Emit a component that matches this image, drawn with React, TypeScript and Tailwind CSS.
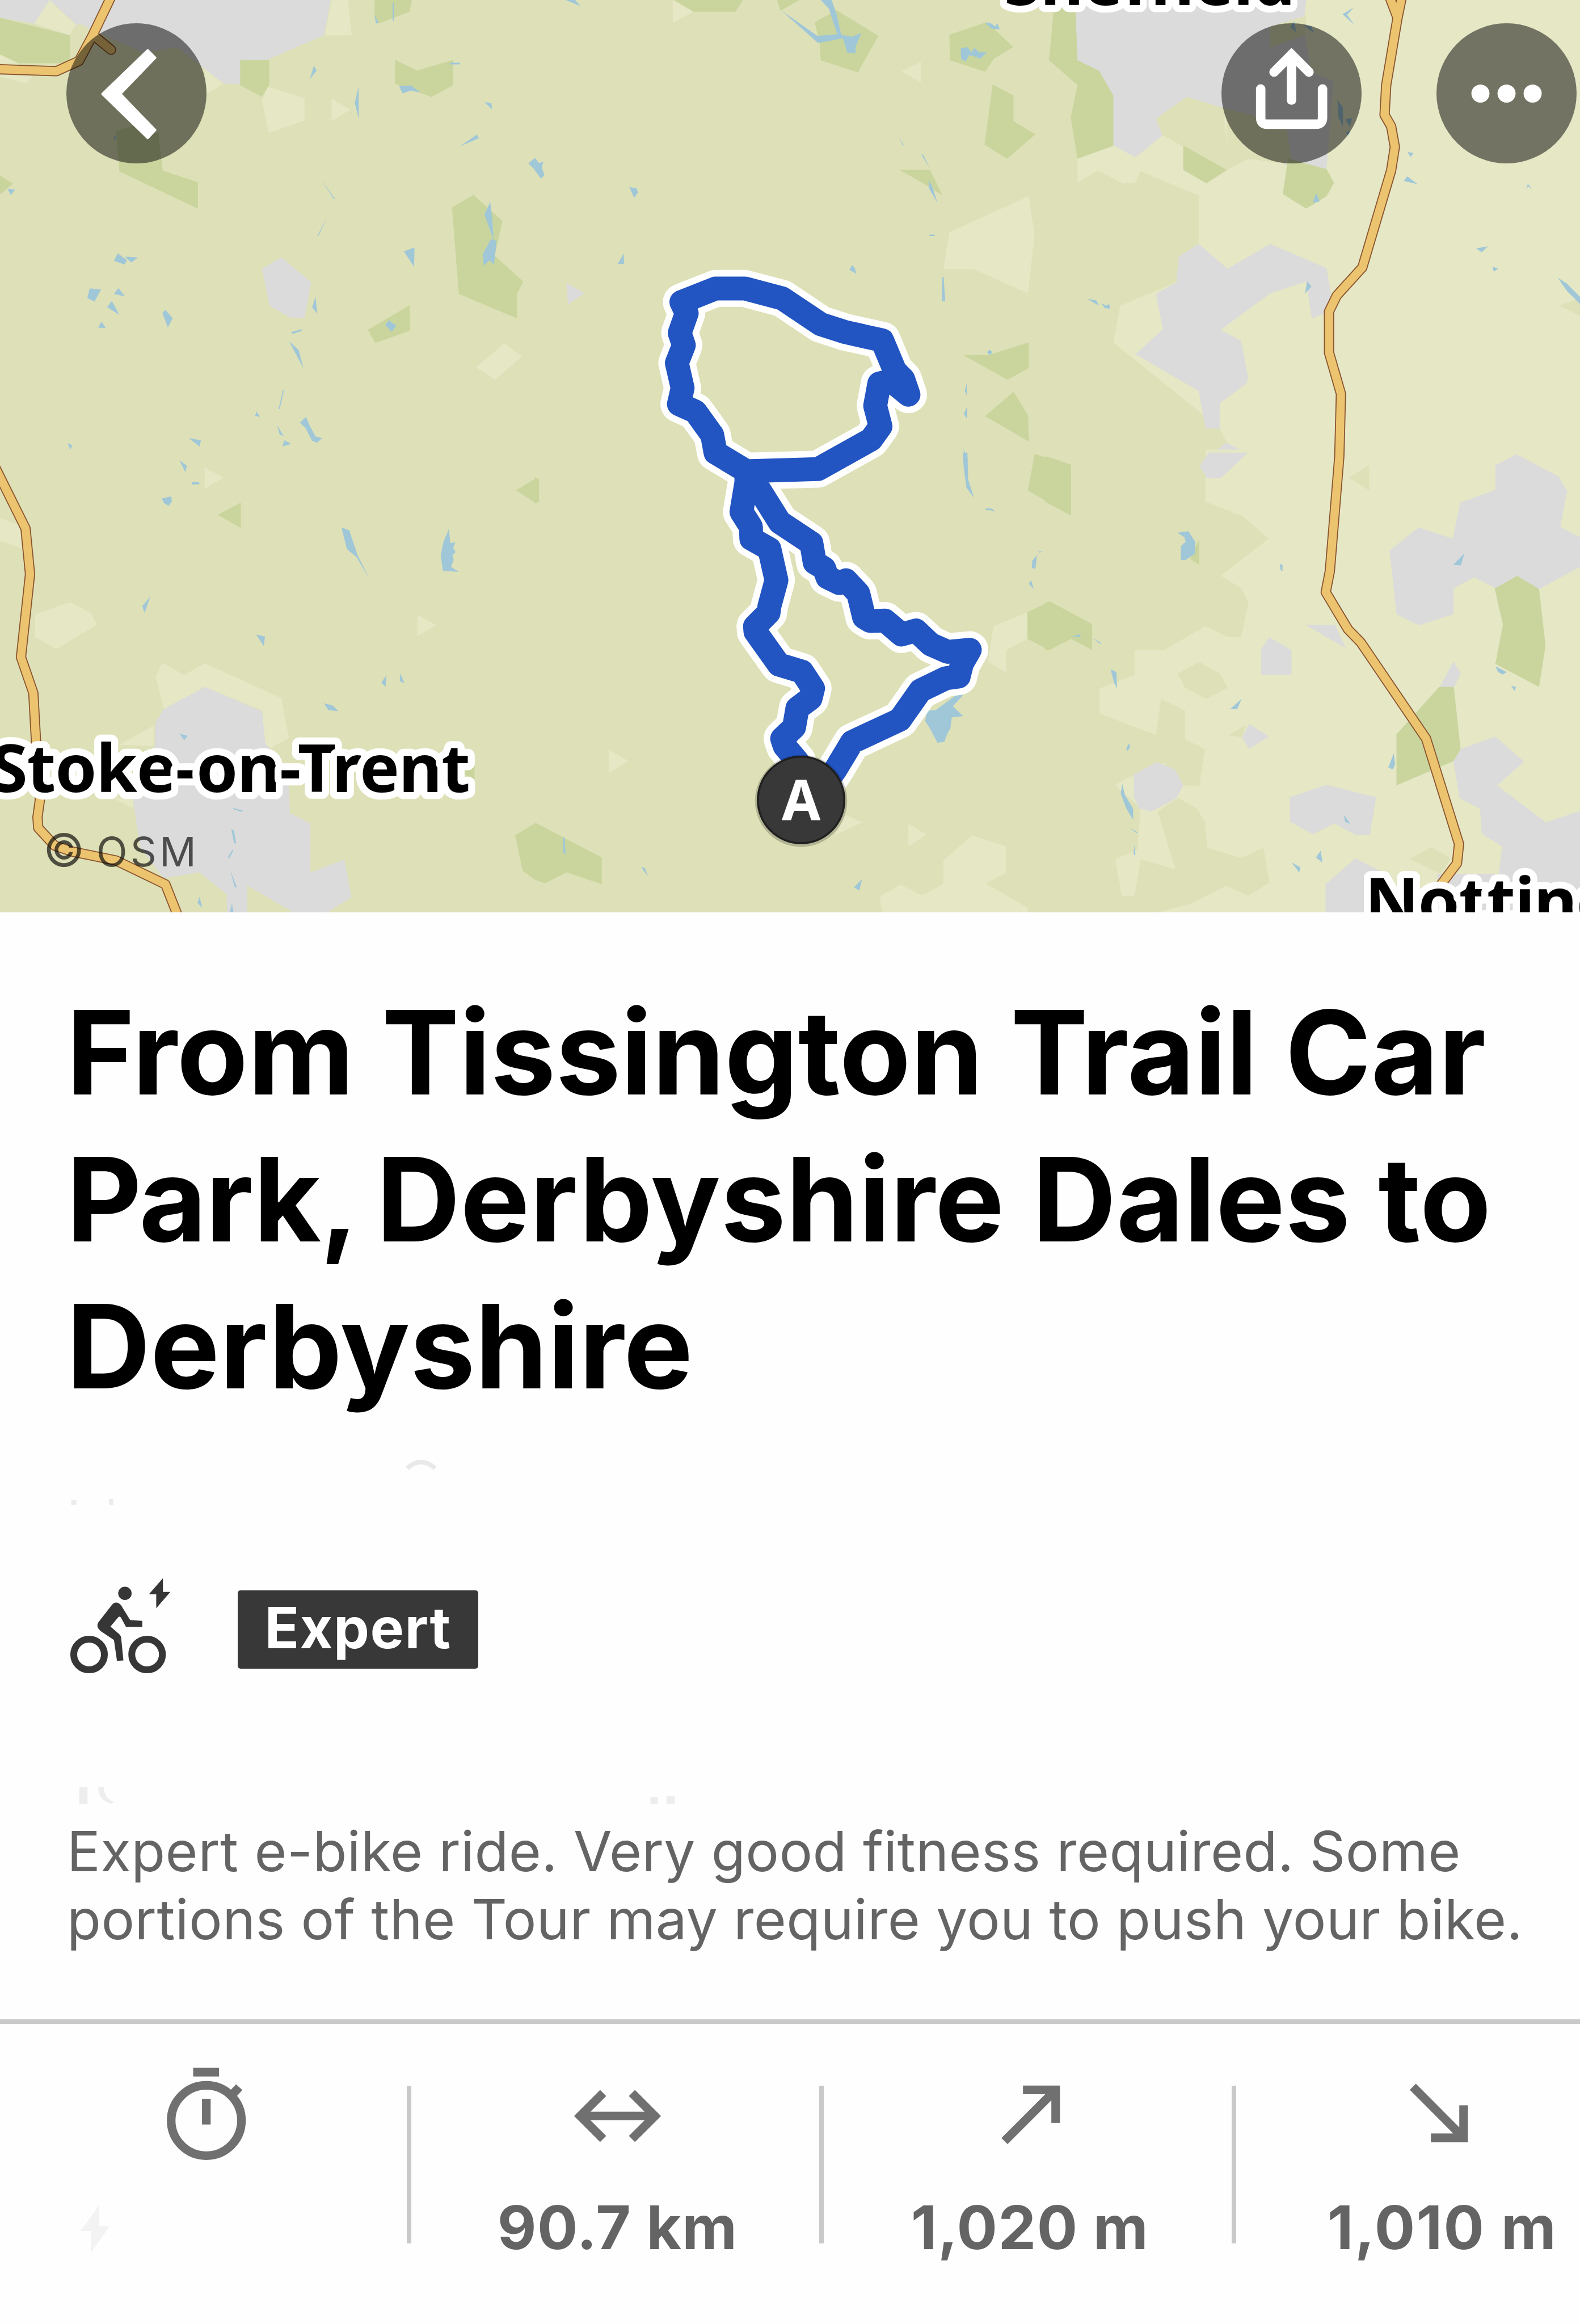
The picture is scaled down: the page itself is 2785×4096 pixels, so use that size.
import { FunctionComponent, ReactNode } from "react";

type Tile = {
  transform: string;
  meadow?: string;
  field?: string;
  town?: string;
  wood?: string;
  scrub?: string;
  water?: string;
};

// Land cover, split in six tiles (three columns, two rows)
const tiles: Tile[] = [
  {
    transform: "translate(0 0) scale(.829082 .714286)",
    town: "M0 0H970L950 120L790 200L745 285H658L600 235L520 160L400 230L270 240L210 120L225 85L145 0L100 80L0 60ZM825 875L912 960L893 1082L850 1080L790 1040L768 915Z",
    field:
      "M145 0L222 85L205 120L100 80ZM972 0H1020L1031 120H952ZM600 235L655 285L605 320ZM0 185L55 215H0ZM0 250L100 250L80 283L0 262ZM785 295L893 335V410L788 452L768 340ZM972 335L1028 373L972 412ZM1478 1168L1530 1212L1452 1292L1395 1250Z",
    meadow: "M232 80L420 180L520 160L600 240L605 320L480 470L205 330V120Z",
    wood: "M0 60L205 120V215H55L0 185ZM704 204H789V290L767 329L704 290ZM1098 0H1208L1200 40L1110 80L1098 60ZM1158 203L1222 240L1328 204V290L1265 330L1158 285ZM340 445L400 425L465 455L477 580L580 620V710L350 583ZM0 597L38 625L0 662ZM1388 663L1473 752L1450 870L1534 958L1515 1000V1083L1345 1000L1325 706ZM1202 1038V1125L1100 1167L1078 1122Z",
    water:
      "M920 223L928 240L908 270ZM1051 295L1052 405L1040 350ZM1170 293L1205 291L1232 315L1205 308L1180 318ZM1320 213H1348V219H1320ZM1151 10H1155V70H1151ZM1098 50L1110 78L1102 80ZM1420 348L1440 350L1443 372ZM1398 458L1404 470L1348 498ZM1568 537V578L1549 556ZM942 612L983 678L978 676ZM960 738L933 803L931 800ZM22 642L44 645L32 664ZM345 862L372 885L365 900L334 887ZM366 873L404 876L385 893ZM263 981L296 985L277 1026L256 1014ZM347 980L366 1008L334 1000ZM328 1024L350 1071L314 1045ZM298 1095L310 1116L287 1114ZM485 1054L506 1083L492 1114L476 1065ZM925 1010L930 1068L915 1045ZM853 1130L885 1120L884 1126L858 1136ZM847 1160L875 1190L890 1254ZM1184 855L1215 842L1214 908ZM1437 687L1443 745L1447 815L1420 730ZM1440 812L1456 820L1448 900L1435 885L1418 904L1415 865ZM1140 1090L1162 1108L1148 1128L1129 1105ZM830 1325L832 1330L820 1392L817 1390ZM752 1400L762 1418L748 1415ZM812 1446L832 1484L820 1478ZM897 1418L908 1448L925 1485L944 1490L930 1506L915 1500L895 1455L879 1438ZM833 1498L854 1510L828 1519ZM553 1490L589 1498L585 1519ZM198 1507L212 1515L206 1530ZM335 460L342 468L335 478Z",
  },
  {
    transform: "translate(1300 0) scale(.829082 .714286)",
    field:
      "M404 0L465 40L404 77ZM1131 210V280L1075 243ZM1448 667L1465 800L1445 998L1285 915H1197L1215 790Z",
    wood: "M408 0H610L588 40H465ZM710 0H775L720 37ZM885 35L1007 122L947 246L838 205L835 145L820 75ZM1325 75L1402 160L1345 200L1320 244L1217 205L1215 118ZM1525 0H1568V265L1507 205ZM1342 287L1403 325V412L1467 457L1384 540L1318 492ZM1068 577H1158L1195 665L1140 625ZM1448 1165V1252L1385 1292L1255 1208H1330ZM1403 1332L1446 1415L1448 1502L1320 1416ZM1465 1545L1530 1568H1462Z",
    scrub: "M457 110V145L435 168L424 140Z",
    town: "M92 962L145 998L97 1036Z",
    water:
      "M838 0H870L885 50L898 118L930 125L957 112L940 160V182L915 178L903 130L830 146L722 35L828 122L886 116L862 30ZM90 0H118L133 20ZM1320 78H1335L1350 90L1355 78L1363 100L1340 98L1332 90ZM1248 165L1268 160L1280 178L1288 162L1302 178L1325 178L1305 200L1285 190L1272 188L1264 208L1250 203ZM0 537L12 555L25 550L20 570L28 595L18 608L0 580ZM277 637L298 640L302 655L291 673ZM260 863L262 897L243 898ZM930 902L937 910L943 932L922 918ZM1194 942H1198L1203 1025H1193ZM1066 463L1083 497L1078 493ZM1131 522L1140 530L1158 573ZM1154 612L1165 635L1180 690L1155 640ZM1157 798H1172V803H1157ZM1325 1198L1333 1190L1341 1198L1334 1208ZM1266 1303V1345L1260 1330ZM1267 1384V1425L1257 1408ZM1256 1525L1270 1568H1262Z",
  },
  {
    transform: "translate(2540 0) scale(.829082 .714286)",
    field:
      "M765 0H1568V1568H590L530 1500L510 1455L200 1165L220 1040L385 960L450 830V665L280 583L265 620L230 625L155 580L95 620V540L200 495L345 460L470 500L660 160Z",
    town: "M85 0H765L760 55L660 90L660 160L762 120L780 245L845 275L825 575L700 560L705 480L530 370L415 330L330 400L345 460L265 535L200 495L150 250L95 205ZM450 830L535 914L660 830L825 912L838 1000L825 1062L782 1084L765 958L660 998L515 1122L575 1160L595 1285L590 1305L512 1372V1458H470L450 1330L265 1205L345 1120L325 1000L385 960L392 872ZM530 1505L597 1545L570 1568H465Z",
    scrub:
      "M765 55L660 90V160L762 120ZM415 330L520 370L535 495L595 540L530 580L345 460L325 405ZM530 370L705 420L725 560L595 540L535 495ZM1568 1015V1075L1508 1040Z",
    wood: "M28 0H88L95 205L158 240L200 325V496L95 540L75 400L95 290L12 205ZM405 495L533 578L473 624L405 578ZM712 540L825 575L847 622L825 668L765 710L697 660ZM0 1553L45 1568H0Z",
    water:
      "M905 25L885 50L906 84L872 48ZM730 72L736 110L718 92ZM755 85L780 90L788 112ZM857 340L873 365V430L860 400ZM880 405L900 402L893 432ZM882 450L895 445L888 462ZM1062 517L1080 520L1072 534ZM1062 600L1092 627L1051 615ZM794 657L805 685L785 690ZM1415 626L1427 642L1416 634L1410 644ZM1264 845L1298 838L1280 858ZM1312 907L1328 914L1315 924ZM768 957L781 975L762 998ZM123 1016L150 1022L158 1040ZM165 1032L180 1040L188 1034L190 1050L175 1048ZM1503 945L1530 965L1568 1010V1034L1530 990Z",
  },
  {
    transform: "translate(0 1100) scale(.829082 .720663)",
    field:
      "M600 50L656 84L600 122ZM0 220L60 245L70 325L0 298ZM205 504L265 540L285 580L165 662L103 622V545ZM1223 546L1280 582L1223 618ZM475 708L540 750L600 710L825 828L847 962L770 1010L770 870L600 790L480 865L457 755ZM450 920V990L350 985ZM330 1165H390V1198ZM1350 1100L1370 1150Z",
    town: "M600 790L768 872L778 980L845 1080L850 1215L910 1250V1415L1010 1372L1030 1500L960 1550H860L725 1460V1550H665V1490L585 1415L480 1435L410 1330L390 1170L450 1150L455 910L480 865Z",
    wood: "M706 168V254L638 210ZM1568 88V168L1513 127ZM1350 1080L1391 1055V1102ZM1568 1250V1440L1532 1410L1510 1290Z",
    water:
      "M526 25L548 45L543 66ZM562 100H584V107H562ZM474 155L502 147L504 165L494 179L481 170ZM441 484L424 540L417 518ZM1001 252L1024 262L1048 345L1083 425L1045 352L1017 325ZM1316 257L1320 305L1335 302L1328 322L1336 335L1326 345L1330 362L1322 385L1345 402L1298 398L1292 345L1300 300ZM751 613L777 620L773 652ZM1133 750L1130 790L1118 775ZM1173 745L1186 778L1172 770ZM950 845L975 852L992 872L962 868ZM526 947L550 955L540 970ZM682 1198L712 1207L708 1211L685 1203ZM678 1268L686 1275L692 1318L686 1316ZM682 1338L684 1342L672 1368L668 1365ZM675 1408L694 1466L688 1465ZM585 1498L593 1535L579 1518ZM680 1520L684 1550H674Z",
  },
  {
    transform: "translate(1300 1100) scale(.829082 .720663)",
    field:
      "M217 1002L275 1040L217 1080ZM1444 538V628L1382 665V742L1328 705L1345 585ZM910 1220L960 1247L880 1290ZM1094 1250L1148 1288L1094 1328ZM1282 1290L1382 1328V1415L1322 1453L1445 1535V1550H1018L1010 1497L1072 1457L1135 1493L1197 1455V1375Z",
    wood: "M0 82L12 90V165L0 172ZM1465 5L1568 40V210L1445 127ZM1508 502L1568 538V630L1508 665L1444 628V538ZM0 1247L196 1365V1455L93 1415L30 1452L0 1440Z",
    water:
      "M1254 0H1268L1270 90L1287 152L1265 118L1257 50ZM1322 188L1340 189L1350 199L1337 194H1322ZM1474 333H1490L1480 337ZM1472 345L1467 392L1457 388L1458 365ZM1455 430L1462 460L1448 442ZM1238 815L1255 818L1225 855L1255 888L1222 893L1218 930L1210 945L1200 975L1180 978L1158 930L1144 905L1150 870L1175 868ZM82 1297H87L90 1352H84ZM312 1398L322 1400L332 1430ZM959 1438L951 1476L935 1466Z",
  },
  {
    transform: "translate(2540 1100) scale(.829082 .720663)",
    field:
      "M470 -10H1568V1550H330L430 1520L530 1460L595 1494L658 1450L640 1332L575 1367L475 1332L468 1245L445 1200L390 1165L330 1210L382 1405L280 1372L262 1495H225L205 1370L270 1340L280 1200L205 1120L260 1085L350 1045L390 1120L452 1125L468 1000L410 965V870L340 830L325 952L160 880V795L262 750V665H350L470 585L535 622H575L596 505L575 457L515 415L655 290L580 215L470 165Z",
    town: "M480 0H595L515 86H475L453 45ZM1382 5L1505 80L1530 130L1510 250L1568 285V385L1448 460L1318 455L1258 420L1197 458V545L1095 582L1030 545L1010 330L1095 252L1195 290L1217 168L1320 125V42ZM763 580H850L882 660ZM657 622L722 665V750H633V665ZM1197 704L1219 745L1197 792L1157 790ZM598 915L657 957L598 998L577 960ZM328 1043L382 1070L405 1122L385 1165L312 1210L275 1200L260 1160V1085ZM825 1120L970 1162L952 1290H912L848 1250L785 1287L718 1245V1162ZM1320 957L1404 1042L1325 1122L1468 1247L1568 1208V1550H1150V1420H1330L1340 1328L1280 1285L1275 1200L1215 1165L1197 1040L1217 1000ZM910 1368L985 1412V1550H822V1455Z",
    wood: "M0 12L76 40V212L0 165ZM15 502L138 578V665L76 628L12 665H0V505ZM452 290V378L425 358ZM1384 415L1448 460L1467 650L1448 790L1320 712L1342 580L1318 458ZM1155 790H1198L1218 1000L1197 1040L1030 1122V950Z",
    scrub:
      "M950 42V127L890 84ZM452 706L512 745L535 793L473 830L410 793L388 745ZM538 953L587 918L578 960ZM1132 1330L1190 1368L1160 1420L1070 1370Z",
    water:
      "M388 270L420 265L440 300V340L412 362L398 362V315L412 300L408 285ZM688 375L696 378V400L690 395ZM1229 340L1219 380L1196 378ZM192 730L209 740L211 795L202 775ZM576 830L563 865L543 864ZM78 620L105 612L100 622ZM140 625L166 643L160 644ZM1320 720L1353 740L1342 748L1328 740ZM1366 786L1380 790L1377 804ZM1022 1014L1026 1050L1020 1068L1006 1062ZM245 982L250 990L242 1006L238 998ZM226 1116L234 1155L258 1200V1238L238 1200L222 1150ZM247 1265L271 1280L268 1283ZM262 1322L265 1356H259ZM875 1220L895 1252L880 1245ZM808 1342L813 1382L794 1365ZM723 1382L748 1398L745 1416Z",
  },
];

const roads = [
  "M3377 -8L3396 42M3407 -8L3396 46L3369 207L3365 279L3381 307L3390 357L3381 414L3311 650L3249 718L3230 757V857L3259 957L3255 1110L3232 1388L3222 1439L3276 1529L3307 1561L3466 1795L3546 2051L3541 2098L3494 2160",
  "M-12 1135L62 1284L73 1395L51 1597L81 1684L87 1792L97 1943L91 1986L93 2012L133 2055L174 2069L282 2091L402 2149L434 2230",
  "M-8 168L137 173L192 148L225 86L272 -12M232 90L270 121",
];

const route =
  "M1947 1900L1938 1850L1907 1813L1901 1795L1930 1767L1938 1721L1970 1697L1976 1673L1949 1632L1893 1615L1836 1535L1835 1522L1868 1489L1870 1473L1887 1410L1870 1334L1826 1309L1825 1280L1802 1244L1814 1172L1814 1145L1739 1100L1731 1057L1690 1000L1650 982L1659 943L1645 882L1662 839L1652 809L1669 761L1656 734L1739 701H1810L1901 725L1995 788L2054 807L2144 827L2175 901L2195 921L2208 959L2166 925L2137 932L2127 986L2140 1036L2117 1068L1988 1140L1814 1145L1843 1186L1895 1269L1972 1320L1980 1367L2003 1381L2011 1403L2040 1417L2056 1410L2086 1442L2100 1500L2115 1509L2151 1508L2191 1542L2226 1532L2262 1566L2303 1584L2357 1579L2338 1612L2330 1644L2299 1648L2237 1678L2187 1749L2071 1803L2030 1871L1985 1935";

const MapLabel: FunctionComponent<{
  x: number;
  y: number;
  width: number;
  children: string;
}> = ({ x, y, width, children }) => {
  return (
    <text
      x={x}
      y={y}
      textLength={width}
      className="fill-black stroke-white stroke-[34px] font-['Noto_Sans',sans-serif] text-[162px] font-bold [paint-order:stroke] [stroke-linejoin:round]"
    >
      {children}
    </text>
  );
};

const TourMap: FunctionComponent = () => {
  return (
    <svg viewBox="0 0 3840 2217" className="block h-[1608px] w-[2785px]">
      <rect width="3840" height="2217" className="fill-[#dee0b7]" />
      {tiles.map((tile) => (
        <g key={tile.transform} transform={tile.transform}>
          <path d={tile.field} className="fill-[#e5e7c5]" />
          <path d={tile.town} className="fill-[#dbdbdb]" />
          <path d={tile.meadow} className="fill-[#dee0b7]" />
          <path d={tile.scrub} className="fill-[#dee0b7]" />
          <path d={tile.wood} className="fill-[#c9d59d]" />
          <path d={tile.water} className="fill-[#9fc7d8]" />
        </g>
      ))}

      {roads.map((d) => (
        <g key={d} fill="none" strokeLinejoin="round" strokeLinecap="round">
          <path d={d} className="stroke-[#8a5530] stroke-[25px]" />
          <path d={d} className="stroke-[#ecc470] stroke-[20px]" />
        </g>
      ))}

      <g fill="none" strokeLinejoin="round" strokeLinecap="round">
        <path d={route} className="stroke-white stroke-[90px]" />
        <path d={route} className="stroke-[#2254c2] stroke-[58px]" />
      </g>

      <circle cx="1947" cy="1946" r="112" className="fill-black/20" />
      <circle
        cx="1947"
        cy="1944"
        r="105"
        className="fill-[#383838] stroke-[#1f1f1f] stroke-[5px]"
      />
      <text
        x="1947"
        y="1994"
        textAnchor="middle"
        className="fill-white font-['Noto_Sans',sans-serif] text-[136px] font-bold"
      >
        A
      </text>

      <MapLabel x={2440} y={12} width={708}>
        Sheffield
      </MapLabel>
      <MapLabel x={-22} y={1925} width={1165}>
        Stoke-on-Trent
      </MapLabel>
      <MapLabel x={3317} y={2249} width={970}>
        Nottingham
      </MapLabel>
      <text
        y="2105"
        className="fill-black/65 font-['Inter',sans-serif] text-[99px]"
      >
        <tspan x="105" className="text-[110px]">
          ©
        </tspan>
        <tspan x="234" textLength="243">
          OSM
        </tspan>
      </text>
    </svg>
  );
};

const RoundButton: FunctionComponent<{
  label: string;
  children: ReactNode;
}> = ({ label, children }) => {
  return (
    <button
      aria-label={label}
      className="size-[247px] rounded-full bg-black/50 text-white"
    >
      <svg viewBox="0 0 341 341" fill="none" className="size-full">
        {children}
      </svg>
    </button>
  );
};

const Stat: FunctionComponent<{
  value?: string;
  tracking?: string;
  icon: ReactNode;
}> = ({ value, tracking, icon }) => {
  return (
    <div className="flex w-[719px] shrink-0 flex-col items-center pl-2">
      <svg
        viewBox="0 0 236 236"
        fill="none"
        stroke="currentColor"
        strokeWidth="21"
        className="size-[171px] text-[#707070]"
      >
        {icon}
      </svg>
      {value ? (
        <div
          className={`mt-[50px] text-[106px] leading-[128px] font-bold whitespace-nowrap text-[#646464] ${tracking}`}
        >
          {value}
        </div>
      ) : (
        <div className="mt-[74px] mr-[388px] h-[86px] w-[52px]">
          <svg viewBox="0 0 72 118" className="size-full fill-[#f3f3f3]">
            <path d="M46 0V51H71L25 117V63H0Z" />
          </svg>
        </div>
      )}
    </div>
  );
};

const Divider: FunctionComponent = () => {
  return <div className="mt-[35px] h-[278px] w-2 shrink-0 bg-[#c9c9c9]" />;
};

const App: FunctionComponent = () => {
  return (
    <div className="h-[4096px] w-[2785px] overflow-hidden bg-[#fefefe] font-['Inter',sans-serif]">
      <div className="relative">
        <TourMap />
        <div className="absolute inset-x-0 top-[41px] flex pr-[6px] pl-[117px]">
          <RoundButton label="Back">
            <path
              d="M198 66L88 172L198 279L216 260L131 172L216 84Z"
              fill="currentColor"
              stroke="currentColor"
              strokeWidth="6"
              strokeLinejoin="round"
            />
          </RoundButton>
          <div className="ml-auto flex gap-[132px]">
            <RoundButton label="Share">
              <g stroke="currentColor" strokeWidth="23" strokeLinecap="round">
                <path d="M170.5 80V187" />
                <path d="M128 119L170.5 76L213 119" />
                <path d="M95.5 160V230Q95.5 245.5 111 245.5H230.5Q246 245.5 246 230V160" />
              </g>
            </RoundButton>
            <RoundButton label="More">
              <g fill="currentColor">
                <circle cx="107" cy="171" r="22" />
                <circle cx="170.5" cy="171" r="22" />
                <circle cx="234" cy="171" r="22" />
              </g>
            </RoundButton>
          </div>
        </div>
      </div>

      <div className="px-[118px] pt-[117px]">
        <h1 className="-ml-px text-[205px] leading-[259px] font-bold whitespace-nowrap text-black">
          <span className="block tracking-[-0.1px]">
            From Tissington Trail Car
          </span>
          <span className="block tracking-[0.3px]">
            <span className="mr-[-16px] tracking-[-2px]">Park,</span> Derbyshire
            Dales to
          </span>
          <span className="block">Derbyshire</span>
        </h1>

        {/* faded date row */}
        <svg
          viewBox="0 0 910 120"
          className="mt-[69px] h-[87px] w-[660px] fill-[#ececec]"
        >
          <path d="M10 100H23V112H10ZM102 98H113V112H102Z" />
          <path
            d="M827 23Q860 -7 895 23"
            fill="none"
            stroke="#e9e9e9"
            strokeWidth="11"
          />
        </svg>

        <div className="mt-[121px] flex items-start">
          <svg
            viewBox="60 40 740 705"
            className="mt-[2px] ml-[4px] h-[170px] w-[179px] text-[#363636]"
          >
            <g fill="none" stroke="currentColor" strokeWidth="50">
              <circle cx="204" cy="600" r="112" />
              <circle cx="628" cy="600" r="112" />
            </g>
            <g fill="currentColor">
              <circle cx="466" cy="153" r="49" />
              <path d="M402 220Q422 220 438 240L504 348L593 354V399H474L437 330Q428 318 417 328L360 396L425 452Q438 465 439 482L455 643L408 646L386 494L290 430Q250 398 272 365L372 236Q384 220 402 220Z" />
              <path d="M744 42V143H798L695 262V160H641Z" />
            </g>
          </svg>
          <div className="mt-[24px] ml-[118px] flex h-[138px] w-[424px] items-center justify-center rounded-[5px] bg-[#383838] pb-[6px] text-[100px] font-bold tracking-[1.4px] text-white">
            Expert
          </div>
        </div>

        {/* faded heading row */}
        <svg
          viewBox="0 0 1500 44"
          className="mt-[196px] h-[32px] w-[1088px] fill-[#ededed]"
        >
          <path d="M30 4H50V44H30ZM76 4H90Q90 30 114 40L108 44Q76 36 76 4ZM1418 28H1436V44H1418ZM1457 26H1477V44H1457Z" />
        </svg>

        <p className="mt-[24px] text-[98px] leading-[120px] tracking-[0.4px] whitespace-nowrap text-[#646464]">
          <span className="block">
            Expert e-bike ride. Very good fitness required. Some
          </span>
          <span className="block">
            portions of the Tour may require you to push your bike.
          </span>
        </p>
      </div>

      <div className="mt-[116px] -ml-[2px] flex border-t-[8px] border-[#c9c9c9] pt-[74px]">
        <Stat
          icon={
            <>
              <circle cx="121" cy="133" r="85.5" />
              <path d="M89 15.5H152M121 80V143M187 67L201 52" />
            </>
          }
        />
        <Divider />
        <Stat
          value="90.7 km"
          tracking="tracking-[1.2px]"
          icon={
            <path d="M83 66L27 122L83 178M27 122H209M153 66L209 122L153 178" />
          }
        />
        <Divider />
        <Stat
          value="1,020 m"
          tracking="tracking-[1.4px]"
          icon={<path d="M101 58.5H180.5V139M180.5 58.5L56 183" />}
        />
        <Divider />
        <Stat
          value="1,010 m"
          tracking="tracking-[2.4px]"
          icon={<path d="M46 51L169.5 175M169.5 96V175H90" />}
        />
      </div>
    </div>
  );
};

export default App;
